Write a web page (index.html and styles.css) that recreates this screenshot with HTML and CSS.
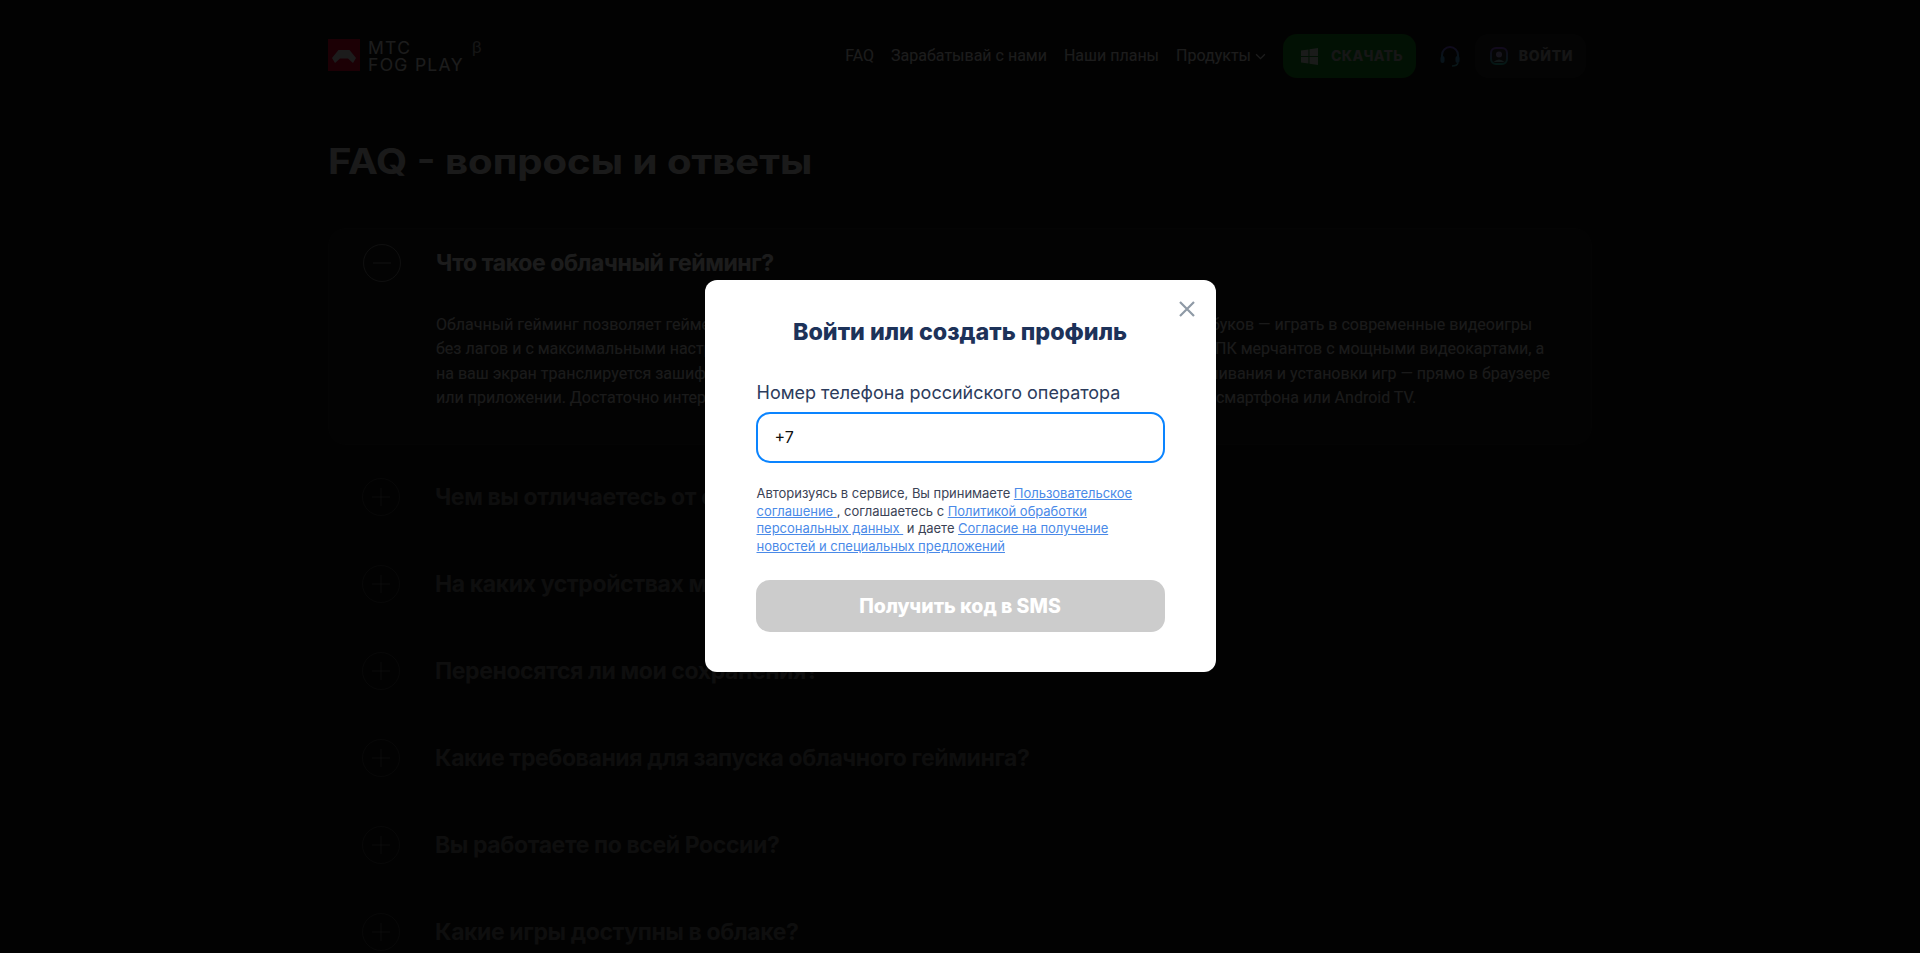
FILE: index.html
```html
<!DOCTYPE html>
<html lang="ru">
<head>
<meta charset="utf-8">
<title>FAQ - вопросы и ответы</title>
<link rel="stylesheet" href="styles.css">
</head>
<body>
<div class="page">
  <header class="header">
    <a class="logo">
      <svg class="logo-mark" viewBox="0 0 32 32" width="32" height="32"><rect width="32" height="32" fill="#ff0032"/><path d="M4 19 10.500 11H21.500L28 19 25 24 20 19.500H12L7 24Z" fill="#fff"/></svg>
      <span class="logo-text">МТС<br>FOG PLAY</span>
      <sup class="logo-beta">β</sup>
    </a>
    <nav class="nav">
      <a>FAQ</a>
      <a>Зарабатывай с нами</a>
      <a>Наши планы</a>
      <a class="nav-drop">Продукты
        <svg viewBox="0 0 12 8" width="11" height="7"><path d="M1 1.500 6 6.500 11 1.500" fill="none" stroke="#fff" stroke-width="1.500"/></svg>
      </a>
    </nav>
    <a class="btn-download">
      <svg viewBox="0 0 16 16" width="17" height="17"><path d="M0 2.300 7 1.300V7.500H0ZM8 1.100 16 0V7.500H8ZM0 8.500H7V14.700L0 13.700ZM8 8.500H16V16L8 14.900Z" fill="#fff"/></svg>
      СКАЧАТЬ
    </a>
    <svg class="support" viewBox="0 0 22 22" width="22" height="22"><defs><linearGradient id="hs" x1="0" y1="0" x2="0" y2="1"><stop offset="0" stop-color="#8a5cff"/><stop offset="1" stop-color="#3fc8e0"/></linearGradient></defs><path d="M3 13V10a8 8 0 0 1 16 0v3" fill="none" stroke="url(#hs)" stroke-width="2"/><rect x="1.500" y="11" width="4" height="7" rx="2" fill="#4fb0e8"/><rect x="16.500" y="11" width="4" height="7" rx="2" fill="#4fb0e8"/><path d="M19 18q-1 3-6 3" fill="none" stroke="#4fc8d8" stroke-width="1.500"/></svg>
    <a class="btn-login">
      <svg viewBox="0 0 18 18" width="18" height="18"><defs><linearGradient id="lg" x1="0" y1="0" x2="0" y2="1"><stop offset="0" stop-color="#a05cff"/><stop offset="1" stop-color="#2fd6c0"/></linearGradient></defs><rect x="1" y="1" width="16" height="16" rx="5" fill="#333" stroke="url(#lg)" stroke-width="2"/><circle cx="9" cy="7.500" r="3" fill="#c9b8ff"/><path d="M3.500 15q5.500-5 11 0z" fill="#9fd8e0"/></svg>
      ВОЙТИ
    </a>
  </header>

  <main class="main">
    <h1 class="title">FAQ - вопросы и ответы</h1>
    <section class="faq">
      <article class="faq-item open">
        <div class="faq-head">
          <span class="faq-icon"><svg viewBox="0 0 38 38" width="38" height="38"><path d="M10 19H28" stroke="#fff" stroke-width="1"/></svg></span>
          <h2>Что такое облачный гейминг?</h2>
        </div>
        <p class="answer">Облачный гейминг позволяет геймерам — даже владельцам слабых компьютеров и компактных ноутбуков — играть в современные видеоигры<br>без лагов и с максимальными настройками графики. Все игры запускаются и работают на удалённых ПК мерчантов с мощными видеокартами, а<br>на ваш экран транслируется зашифрованный видеопоток. Вам больше не нужно ожидать долгого скачивания и установки игр — прямо в браузере<br>или приложении. Достаточно интернет-соединения и любого экрана компьютера, ноутбука, планшета, смартфона или Android TV.</p>
      </article>
      <article class="faq-item"><div class="faq-head"><span class="faq-icon"><svg viewBox="0 0 38 38" width="38" height="38"><path d="M10 19H28M19 10V28" stroke="#fff" stroke-width="1"/></svg></span><h2>Чем вы отличаетесь от остальных сервисов?</h2></div></article>
      <article class="faq-item"><div class="faq-head"><span class="faq-icon"><svg viewBox="0 0 38 38" width="38" height="38"><path d="M10 19H28M19 10V28" stroke="#fff" stroke-width="1"/></svg></span><h2>На каких устройствах можно играть?</h2></div></article>
      <article class="faq-item"><div class="faq-head"><span class="faq-icon"><svg viewBox="0 0 38 38" width="38" height="38"><path d="M10 19H28M19 10V28" stroke="#fff" stroke-width="1"/></svg></span><h2>Переносятся ли мои сохранения?</h2></div></article>
      <article class="faq-item"><div class="faq-head"><span class="faq-icon"><svg viewBox="0 0 38 38" width="38" height="38"><path d="M10 19H28M19 10V28" stroke="#fff" stroke-width="1"/></svg></span><h2>Какие требования для запуска облачного гейминга?</h2></div></article>
      <article class="faq-item"><div class="faq-head"><span class="faq-icon"><svg viewBox="0 0 38 38" width="38" height="38"><path d="M10 19H28M19 10V28" stroke="#fff" stroke-width="1"/></svg></span><h2>Вы работаете по всей России?</h2></div></article>
      <article class="faq-item"><div class="faq-head"><span class="faq-icon"><svg viewBox="0 0 38 38" width="38" height="38"><path d="M10 19H28M19 10V28" stroke="#fff" stroke-width="1"/></svg></span><h2>Какие игры доступны в облаке?</h2></div></article>
    </section>
  </main>
</div>

<div class="overlay">
  <div class="modal">
    <button class="modal-close" aria-label="Закрыть">
      <svg viewBox="0 0 16 16" width="16" height="16"><path d="M1 1 15 15M15 1 1 15" stroke="#8f9aa6" stroke-width="2.200" fill="none"/></svg>
    </button>
    <h2 class="modal-title">Войти или создать профиль</h2>
    <label class="field-label" for="phone">Номер телефона российского оператора</label>
    <input class="field-input" id="phone" value="+7">
    <p class="legal">Авторизуясь в сервисе, Вы принимаете <a>Пользовательское соглашение </a>, соглашаетесь с <a>Политикой обработки персональных данных&nbsp;</a> и даете <a>Согласие на получение новостей и специальных предложений</a></p>
    <button class="submit">Получить код в SMS</button>
  </div>
</div>
</body>
</html>
```

FILE: styles.css
```css
* { box-sizing: border-box; }
html, body { margin: 0; height: 100%; overflow: hidden; }
body { background: #151515; color: #fff; font-family: "Inter", "Liberation Sans", sans-serif; }

.page { width: 1264px; margin: 0 auto; }

.header { height: 112px; display: flex; align-items: center; }
.logo { display: flex; align-items: flex-start; }
.logo-mark { display: block; }
.logo-text { margin: 0 0 0 8px; font: 400 17.500px/17px "Inter", sans-serif; letter-spacing: 1.300px; color: #fff; }
.logo-beta { margin-left: 8px; font: 400 17px/16px "Roboto", sans-serif; color: #bbb; }
.nav { margin-left: auto; display: flex; gap: 17px; font: 400 16px/20px "Roboto", sans-serif; color: #fff; }
.nav-drop { display: flex; align-items: center; gap: 4px; }
.btn-download { margin-left: 17px; width: 133px; height: 44px; padding-left: 5px; border-radius: 14px; background: #169a24; display: flex; align-items: center; justify-content: center; gap: 13px; font: 800 14px/1 "Inter", sans-serif; letter-spacing: .3px; color: #c4c4c4; }
.btn-download svg { opacity: .9; }
.support { margin: 0 14px 0 23px; }
.btn-login { width: 111px; height: 44px; margin-right: 6px; padding-left: 2px; border-radius: 14px; background: #2b2b2b; display: flex; align-items: center; justify-content: center; gap: 11px; font: 800 14px/1 "Inter", sans-serif; letter-spacing: .7px; color: #bbb; }

.main { padding-top: 27px; }
.title { margin: 0 0 45px; font: 700 35px/44px "Inter", sans-serif; color: #eee; transform: scaleX(1.145); transform-origin: left center; }

.faq { display: flex; flex-direction: column; }
.faq-item { margin-bottom: 49px; padding: 0 34px; border-radius: 16px; color: #7c7c7c; }
.faq-item .faq-icon { border-color: #444; }
.faq-item svg path { stroke: #666; }
.faq-item.open { color: #fff; background: #202020; border: 1px solid #262626; border-radius: 18px; padding: 15px 34px 34px; margin-bottom: 33px; }
.faq-item.open .faq-icon { border-color: #888; }
.faq-item.open svg path { stroke: #999; }
.faq-head { display: flex; align-items: center; gap: 35px; height: 38px; }
.faq-head h2 { margin: 0; font: 700 23px/38px "Inter", sans-serif; letter-spacing: -.4px; }
.faq-icon { width: 38px; height: 38px; border: 1px solid #fff; border-radius: 50%; flex: none; display: block; }
.faq-icon svg { display: block; margin: -1px; }
.answer { margin: 31px 0 0 73px; font: 400 16px/24.300px "Roboto", sans-serif; color: #eee; white-space: nowrap; }

.overlay { position: fixed; inset: 0; background: rgba(0, 0, 0, .89); display: flex; align-items: center; justify-content: center; padding-bottom: 1px; }
.modal { position: relative; width: 511px; height: 392px; padding: 36px 51px 0; background: #fff; border-radius: 12px; }
.modal-close { position: absolute; top: 21px; right: 21px; width: 16px; height: 16px; padding: 0; border: 0; background: none; }
.modal-close svg { display: block; }
.modal-title { margin: 0 0 33px; text-align: center; font: 800 23.300px/32px "Inter", sans-serif; color: #1d3259; }
.field-label { display: block; margin: 0 0 7px 1px; font: 400 18px/24px "Inter", sans-serif; color: #2c3c5c; }
.field-input { display: block; width: 409px; height: 51px; padding: 0 17px 2px; border: 2px solid #0a84ff; border-radius: 14px; outline: 0; font: 400 16px/1 "Inter", sans-serif; color: #111; }
.legal { margin: 22px 0 25px 1px; font: 400 13px/17.500px "Inter", sans-serif; letter-spacing: -.03px; color: #3b4356; }
.legal a { color: #4a8ae8; text-decoration: underline; }
.submit { display: block; width: 409px; height: 52px; padding-top: 2px; border: 0; border-radius: 14px; background: #ccc; color: #fff; font: 800 19.500px/1 "Inter", sans-serif; }
```
